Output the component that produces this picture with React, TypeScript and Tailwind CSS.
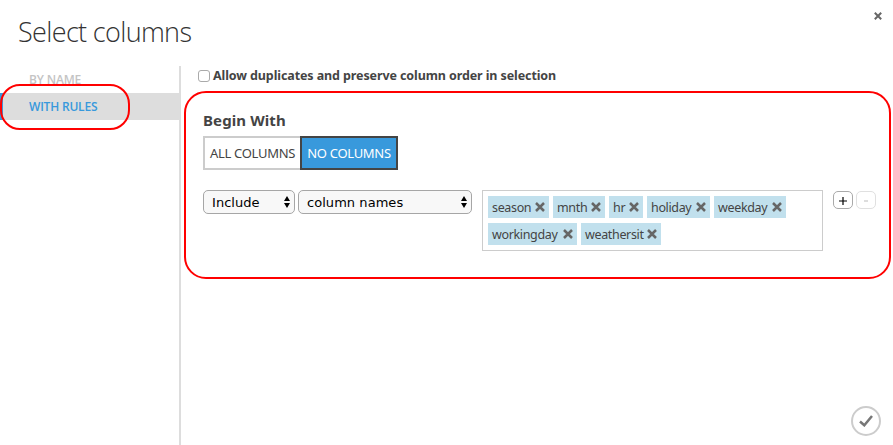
import React from "react";

const tags = [
  { name: "season", width: "w-[61px]" },
  { name: "mnth", width: "w-[52px]" },
  { name: "hr", width: "w-[34px]" },
  { name: "holiday", width: "w-[63px]" },
  { name: "weekday", width: "w-[72px]" },
  { name: "workingday", width: "w-[89px]" },
  { name: "weathersit", width: "w-[80px]" },
];

function Cross({ className }: { className: string }) {
  return (
    <svg viewBox="0 0 10 10" className={className} fill="none" stroke="currentColor" strokeWidth="2.5">
      <path d="M1 1L9 9M9 1L1 9" />
    </svg>
  );
}

function Select({ label, className }: { label: string; className: string }) {
  return (
    <button
      className={`flex h-6 items-center justify-between rounded-[5px] border border-[#a6a6a6] bg-[#f8f8f8] pr-1 pl-2 text-[13px] tracking-[0.05px] text-black font-['DejaVu_Sans',sans-serif] ${className}`}
    >
      <span className="pt-px">{label}</span>
      <svg viewBox="0 0 6 12" className="h-3 w-1.5" fill="currentColor">
        <path d="M3 0L6 5H0ZM3 12L0 7H6Z" />
      </svg>
    </button>
  );
}

export default function App() {
  return (
    <div className="relative flex h-[445px] w-[893px] flex-col overflow-hidden bg-white text-[#444] font-['Noto_Sans',sans-serif]">
      <header className="flex h-[66px] shrink-0 items-start justify-between pr-[11px] pl-[18px]">
        <h1 className="pt-[12px] text-[27px] leading-[40px] font-light tracking-[-0.65px] whitespace-nowrap text-[#333] font-['Open_Sans',sans-serif]">
          Select columns
        </h1>
        <button className="mt-3 text-[#666]">
          <Cross className="h-2 w-2" />
        </button>
      </header>

      <div className="flex flex-1">
        <nav className="w-[181px] shrink-0 border-r-2 border-[#ddd] text-[12px] font-semibold font-['Open_Sans',sans-serif]">
          <div className="flex h-[27px] items-center pt-px pl-[29px] tracking-[-0.15px] text-[#c4c4c4]">BY NAME</div>
          <div className="flex h-[27px] items-center border-l-[3px] border-[#3899dc] bg-[#ddd] pt-px pl-[26px] tracking-[-0.2px] text-[#3899dc]">
            WITH RULES
          </div>
        </nav>

        <main className="flex flex-1 flex-col pl-[3px]">
          <label className="flex h-[25px] shrink-0 items-start pt-[4px] pl-[14px]">
            <span className="h-3 w-3 rounded-[3px] border border-[#aaa] bg-white" />
            <span className="ml-[3px] text-[12.5px] leading-3 font-bold tracking-[-0.1px] whitespace-nowrap">
              Allow duplicates and preserve column order in selection
            </span>
          </label>

          <section className="h-[188px] w-[707px] rounded-[22px] border-2 border-[#f00] pt-[17px] pl-[17px]">
            <h2 className="text-[15px] leading-5 font-bold tracking-[0.1px] whitespace-nowrap">Begin With</h2>
            <div className="mt-[6px] flex text-[13px]">
              <button className="h-[34px] w-[97px] border-2 border-r-0 border-[#ccc] pt-px tracking-[-0.3px] whitespace-nowrap">ALL COLUMNS</button>
              <button className="h-[34px] w-[98px] border-2 border-[#444] bg-[#3899dc] pt-px tracking-[-0.3px] whitespace-nowrap text-white">NO COLUMNS</button>
            </div>

            <div className="mt-5 flex items-start">
              <Select label="Include" className="w-[92px]" />
              <Select label="column names" className="ml-[3px] w-[174px]" />
              <div className="ml-[10px] flex h-[61px] w-[341px] flex-wrap content-start gap-x-1 gap-y-[5px] border border-[#ccc] pt-[5px] pl-[5px] text-[12.5px]">
                {tags.map((tag) => (
                  <span key={tag.name} className={`flex h-[22px] items-center justify-between bg-[#c1e0ed] pr-[4px] pl-[4px] tracking-[-0.35px] ${tag.width}`}>
                    <span className="pt-[3px]">{tag.name}</span>
                    <Cross className="h-[10px] w-[10px] text-[#666]" />
                  </span>
                ))}
              </div>
              <button className="mt-[1px] ml-[10px] flex h-[18px] w-5 items-center justify-center rounded-[5px] border border-[#aaa] text-black">
                <svg viewBox="0 0 8 8" className="mt-0.5 h-2 w-2" stroke="currentColor" strokeWidth="1.2"><path d="M0 4H8M4 0V8" /></svg>
              </button>
              <button className="mt-[1px] ml-[3px] flex h-[18px] w-5 items-center justify-center rounded-[5px] border border-[#e0e0e0] text-[#bbb]">
                <svg viewBox="0 0 4 2" className="mt-0.5 h-0.5 w-1" stroke="currentColor"><path d="M0 1H4" /></svg>
              </button>
            </div>
          </section>

          <button className="mt-auto mr-[12px] mb-[9px] flex h-[30px] w-[30px] items-center justify-center self-end rounded-full border-2 border-[#ccc] text-[#777]">
            <svg viewBox="0 0 14 12" className="h-3 w-[14px]" fill="none" stroke="currentColor" strokeWidth="2.5">
              <path d="M1 6.5L5.3 10.3L13 1" />
            </svg>
          </button>
        </main>
      </div>

      <div className="pointer-events-none absolute top-[84px] left-0 h-[46px] w-[130px] rounded-[20px] border-2 border-[#f00]" />
    </div>
  );
}
